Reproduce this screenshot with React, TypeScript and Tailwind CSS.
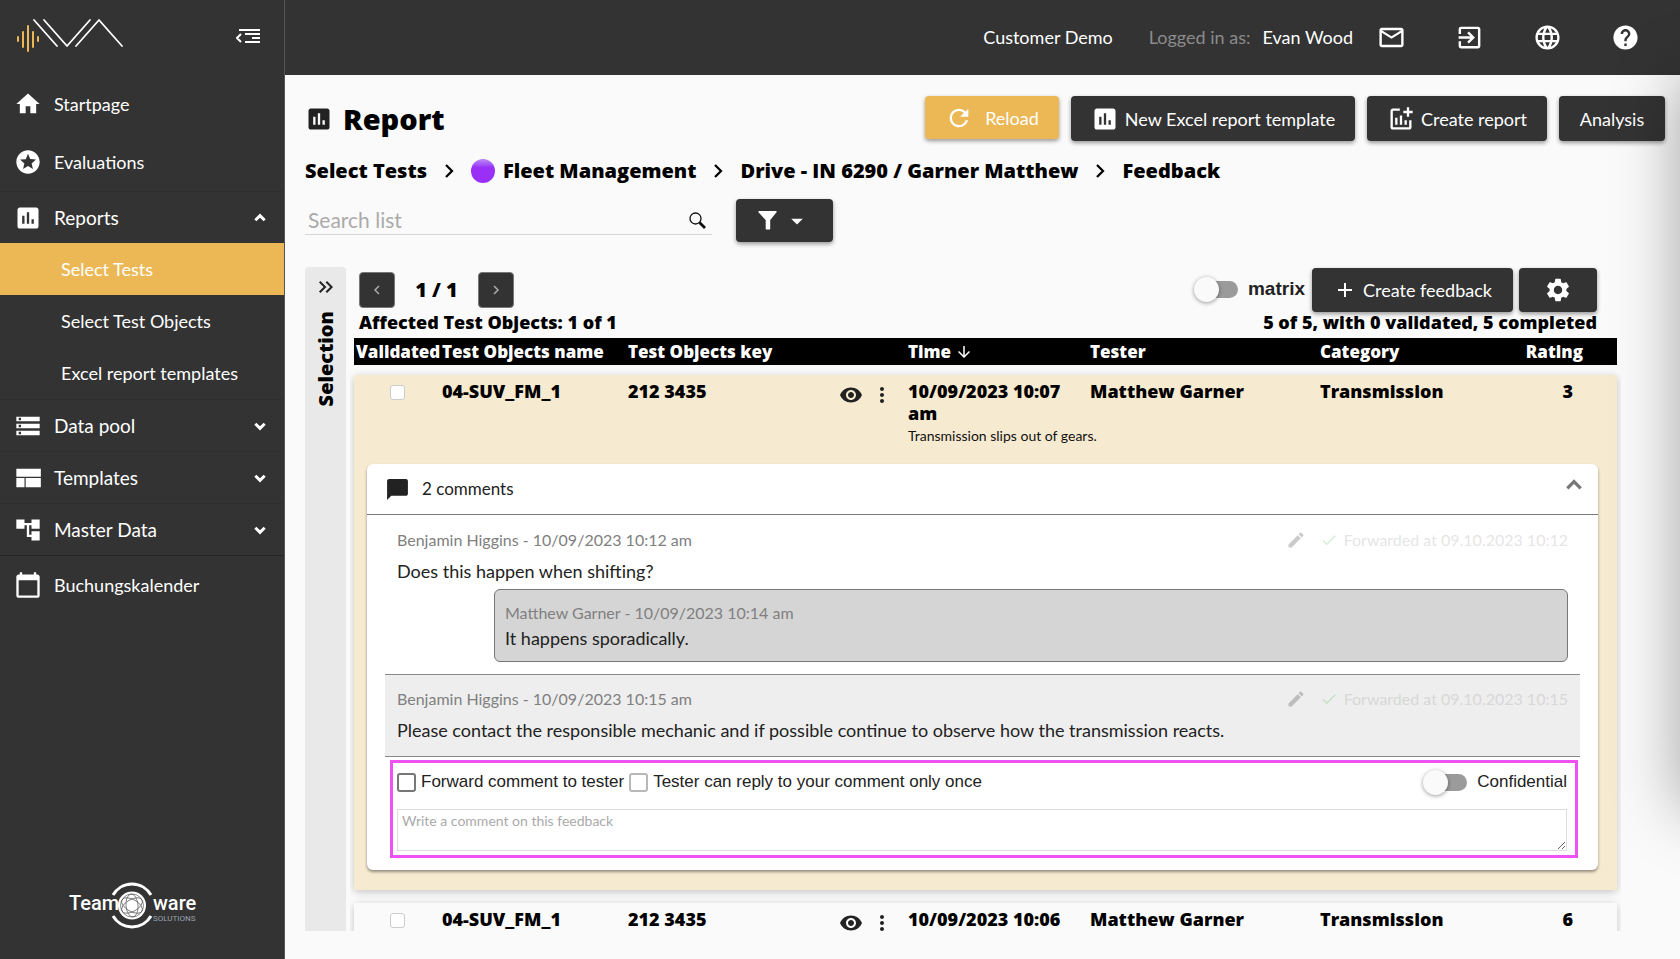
import { ReactNode } from 'react'
import {
  MdAccountTree,
  MdAdd,
  MdAddchart,
  MdArrowDownward,
  MdArrowDropDown,
  MdAssessment,
  MdCalendarToday,
  MdChatBubble,
  MdCheck,
  MdEdit,
  MdExitToApp,
  MdHelp,
  MdHome,
  MdKeyboardDoubleArrowRight,
  MdLanguage,
  MdMailOutline,
  MdMoreVert,
  MdRefresh,
  MdSettings,
  MdStars,
  MdStorage,
  MdVisibility,
} from 'react-icons/md'

function Chevron({ dir, className, stroke = 2 }: { dir: 'up' | 'down' | 'left' | 'right'; className?: string; stroke?: number }) {
  const points = {
    up: '2,8 6,4 10,8',
    down: '2,4 6,8 10,4',
    left: '8,2 4,6 8,10',
    right: '4,2 8,6 4,10',
  }
  return (
    <svg viewBox="0 0 12 12" className={className} fill="none" stroke="currentColor" strokeWidth={stroke} aria-hidden="true">
      <polyline points={points[dir]} />
    </svg>
  )
}

function Logo() {
  return (
    <svg width="108" height="36" viewBox="0 0 108 36" fill="none" strokeLinecap="round" aria-label="Logo">
      <g stroke="#ebb855" strokeWidth="2">
        <path d="M2 19v4M7 14v15M12 8v25M17 14v15M22 19v4" />
      </g>
      <g stroke="#fff" strokeWidth="1.8" strokeLinejoin="round">
        <path d="M18 2l23 26M28 2l23 26L74 2M60 28L83 2l23 26" />
      </g>
    </svg>
  )
}

function MenuFoldIcon() {
  return (
    <svg width="24" height="16" viewBox="0 0 24 16" fill="none" stroke="currentColor" strokeWidth="2" aria-hidden="true">
      <path d="M3 2h21M9 6h15M16 10h8M9 14h15M5 6L1 10l4 4" />
    </svg>
  )
}

function ViewCompactIcon({ className }: { className?: string }) {
  return (
    <svg viewBox="0 0 24 24" fill="currentColor" className={className} aria-hidden="true">
      <path d="M2 20h7v-8H2v8zm8 0h13v-8H10v8zM2 4v7h21V4H2z" />
    </svg>
  )
}

function TeamwareLogo() {
  return (
    <svg width="128" height="50" viewBox="0 0 128 50" fill="none" aria-label="Teamware Solutions">
      <g stroke="#fff" strokeWidth="3">
        <path d="M44 14a22 22 0 0 1 38 0M44 35a22 22 0 0 0 38 0" />
      </g>
      <circle cx="63" cy="24.500" r="14" fill="#fff" />
      <g stroke="#555" strokeWidth="0.7">
        <circle cx="63" cy="24.500" r="11.500" />
        <ellipse cx="63" cy="24.500" rx="11.500" ry="6" transform="rotate(30 63 24.500)" />
        <ellipse cx="63" cy="24.500" rx="11.500" ry="6" transform="rotate(-30 63 24.500)" />
        <ellipse cx="63" cy="24.500" rx="11.500" ry="6" transform="rotate(85 63 24.500)" />
      </g>
    </svg>
  )
}

interface NavItem {
  label: string
  icon: ReactNode
  open?: boolean
  children?: string[]
}

const topItems: NavItem[] = [
  { label: 'Startpage', icon: <MdHome className="size-7" /> },
  { label: 'Evaluations', icon: <MdStars className="size-7" /> },
]

const groups: NavItem[] = [
  {
    label: 'Reports',
    icon: <MdAssessment className="size-7" />,
    open: true,
    children: ['Select Tests', 'Select Test Objects', 'Excel report templates'],
  },
  { label: 'Data pool', icon: <MdStorage className="size-7" /> },
  { label: 'Templates', icon: <ViewCompactIcon className="size-7" /> },
  { label: 'Master Data', icon: <MdAccountTree className="size-7" /> },
]

function Sidebar() {
  return (
    <aside className="flex w-[285px] shrink-0 flex-col border-r border-[#555] bg-[#333] text-lg text-white">
      <div className="flex h-[75px] items-center justify-between pr-6 pb-1 pl-4">
        <Logo />
        <button aria-label="Collapse menu">
          <MenuFoldIcon />
        </button>
      </div>
      <nav>
        {topItems.map((item) => (
          <a key={item.label} href="#" className="flex h-[58px] items-center gap-3 pl-3.5">
            {item.icon}
            {item.label}
          </a>
        ))}
        {groups.map((group) => (
          <div key={group.label} className="border-t border-[#2f2f2f]">
            <button className="flex h-[51px] w-full items-center gap-3 pr-[17px] pl-3.5 text-[19px]">
              {group.icon}
              {group.label}
              <Chevron dir={group.open ? 'up' : 'down'} className="ml-auto size-3.5" stroke={2.5} />
            </button>
            {group.children?.map((child, i) => (
              <a
                key={child}
                href="#"
                className={`flex h-[52px] items-center pl-[61px] ${i === 0 ? 'bg-[#ebb855]' : ''}`}
              >
                {child}
              </a>
            ))}
          </div>
        ))}
        <a href="#" className="flex h-[58px] items-center gap-3 border-t border-[#262626] pl-3.5">
          <MdCalendarToday className="size-7" />
          Buchungskalender
        </a>
      </nav>
      <div className="relative mt-auto mb-7 ml-[69px] h-[50px] w-32 font-['Roboto',sans-serif]">
        <TeamwareLogo />
        <span className="absolute top-2 left-0 text-[20px] leading-7 font-medium">Team</span>
        <span className="absolute top-2 left-[84px] text-[20px] leading-7 font-medium">ware</span>
        <span className="absolute top-8 left-[84px] text-[8px] leading-3 text-gray-400">SOLUTIONS</span>
      </div>
    </aside>
  )
}

function TopBar() {
  return (
    <header className="flex h-[75px] shrink-0 items-center justify-end bg-[#333] pr-10 text-lg leading-6 text-white">
      <div className="flex pr-6 pb-0.5">
        <span className="mr-9">Customer Demo</span>
        <span className="mr-3 text-[#8b8b8b]">Logged in as:</span>
        <span>Evan Wood</span>
      </div>
      <div className="flex gap-[49px]">
        <button aria-label="Messages"><MdMailOutline className="size-[29px]" /></button>
        <button aria-label="Log out"><MdExitToApp className="size-[29px]" /></button>
        <button aria-label="Language"><MdLanguage className="size-[29px]" /></button>
        <button aria-label="Help"><MdHelp className="size-[29px]" /></button>
      </div>
    </header>
  )
}

function DarkButton({ children, className = '', label }: { children: ReactNode; className?: string; label?: string }) {
  return (
    <button
      aria-label={label}
      className={`flex shrink-0 items-center justify-center rounded bg-[#333] text-lg text-white shadow-[0_2px_4px_rgba(0,0,0,0.4)] ${className}`}
    >
      {children}
    </button>
  )
}

function Toggle({ label, className = '' }: { label: string; className?: string }) {
  return (
    <label className={`flex items-center gap-2.5 font-['Liberation_Sans',Arial,sans-serif] text-[#222] ${className}`}>
      <input
        type="checkbox"
        role="switch"
        className="relative h-[17px] w-[38px] appearance-none rounded-full bg-[#9b9b9b] before:absolute before:-top-1 before:-left-1.5 before:size-[25px] before:rounded-full before:bg-[#fafafa] before:shadow-[0_1px_4px_rgba(0,0,0,0.4)] before:content-['']"
      />
      {label}
    </label>
  )
}

function PageHeader() {
  return (
    <div className="pr-[15px] pl-5">
      <div className="flex items-center pt-[21px]">
        <MdAssessment className="size-7 text-[#222]" />
        <h1 className="ml-2.5 font-['Open_Sans',sans-serif] text-[29px] leading-[45px] font-extrabold text-black">Report</h1>
        <div className="ml-auto flex items-start gap-3">
          <button className="flex h-[43px] w-[134px] items-center justify-center gap-3 rounded bg-[#ebb855] text-lg text-white shadow-[0_2px_4px_rgba(0,0,0,0.4)]">
            <MdRefresh className="size-7" />
            Reload
          </button>
          <DarkButton className="h-[45px] w-[284px] gap-1.5">
            <MdAssessment className="size-7" />
            New Excel report template
          </DarkButton>
          <DarkButton className="h-[45px] w-[180px] gap-1.5">
            <MdAddchart className="size-7" />
            Create report
          </DarkButton>
          <DarkButton className="h-[45px] w-[106px]">Analysis</DarkButton>
        </div>
      </div>
      <nav className="mt-4 flex h-7 items-center font-['Open_Sans',sans-serif] text-xl font-extrabold text-black">
        <a href="#">Select Tests</a>
        <Chevron dir="right" className="mx-[13px] size-[18px]" stroke={1.5} />
        <span className="mr-2 size-6 rounded-full bg-linear-to-b from-[#b77cf5] from-5% to-[#9a2ff6] to-35%" />
        <a href="#">Fleet Management</a>
        <Chevron dir="right" className="mx-[13px] size-[18px]" stroke={1.5} />
        <a href="#">Drive - IN 6290 / Garner Matthew</a>
        <Chevron dir="right" className="mx-[13px] size-[18px]" stroke={1.5} />
        <span>Feedback</span>
      </nav>
      <div className="mt-3.5 flex h-[43px] items-center gap-6">
        <label className="flex h-7 w-[407px] items-center border-b border-[#d6d6d6] pr-1.5">
          <input
            type="text"
            aria-label="Search list"
            placeholder="Search list"
            className="min-w-0 flex-1 bg-transparent pl-[3px] text-[21px] leading-6 outline-none placeholder:text-[#aaa]"
          />
          <svg width="17" height="17" viewBox="0 0 17 17" fill="none" stroke="#111" aria-hidden="true">
            <circle cx="6.500" cy="6.500" r="5.500" strokeWidth="1.300" />
            <path d="M10.500 10.500l5.500 5.500" strokeWidth="2.800" />
          </svg>
        </label>
        <DarkButton className="h-[43px] w-[97px] gap-1.5" label="Filter">
          <svg width="19" height="21" viewBox="0 0 21 21" fill="currentColor" aria-hidden="true">
            <path d="M1 0h19q1 0 .5 1.500L13.500 10v9.500q0 1-1 1h-3q-1 0-1-1V10L.5 1.500Q0 0 1 0z" />
          </svg>
          <MdArrowDropDown className="size-7" />
        </DarkButton>
      </div>
    </div>
  )
}

function CommentHead({ author, time, forwarded }: { author: string; time: string; forwarded: string }) {
  return (
    <div className="flex h-6 items-center text-base text-[#808080]">
      <span>{author} - {time}</span>
      <span className="ml-auto flex items-center opacity-20">
        <button aria-label="Edit comment"><MdEdit className="size-5 text-black" /></button>
        <MdCheck className="mr-1.5 ml-3.5 size-[18px] text-[#2eb82e]" />
        Forwarded at {forwarded}
      </span>
    </div>
  )
}

function CommentForm() {
  return (
    <form className="mt-[3px] mr-0.5 ml-[5px] border-[3px] border-[#ee52f5] px-1 pt-1 pb-1 font-['Liberation_Sans',Arial,sans-serif] text-[17px] text-[#222]">
      <div className="flex h-[30px] items-center gap-[5px]">
        <label className="flex items-center gap-[5px]">
          <input type="checkbox" className="size-[19px] appearance-none rounded-[3px] border-2 border-[#777]" />
          Forward comment to tester
        </label>
        <label className="flex items-center gap-[5px]">
          <input type="checkbox" className="size-[19px] appearance-none rounded-[3px] border-2 border-[#b8b8b8]" />
          Tester can reply to your comment only once
        </label>
        <Toggle label="Confidential" className="mr-1 ml-auto" />
      </div>
      <div className="mt-3 mr-1">
        <textarea
          aria-label="Write a comment on this feedback"
          placeholder="Write a comment on this feedback"
          className="block h-[42px] w-full border border-[#ddd] px-1 py-px font-['Lato',sans-serif] text-sm placeholder:text-[#aaa]"
        />
      </div>
    </form>
  )
}

function Comments() {
  return (
    <section className="mr-[19px] mb-5 ml-[13px] rounded-md bg-white pb-3 text-[#222] shadow-[0_2px_3px_rgba(0,0,0,0.4)]">
      <div className="flex h-[51px] items-center border-b border-[#777] pr-3.5 pl-[18px]">
        <MdChatBubble className="mr-3 size-[25px]" />
        <span className="text-[17px]">2 comments</span>
        <button aria-label="Collapse comments" className="mb-2 ml-auto text-[#777]">
          <Chevron dir="up" className="size-5" />
        </button>
      </div>
      <div className="px-[18px]">
        <article className="px-3 pt-[13px] pb-3">
          <CommentHead author="Benjamin Higgins" time="10/09/2023 10:12 am" forwarded="09.10.2023 10:12" />
          <p className="mt-[7px] text-lg leading-6">Does this happen when shifting?</p>
          <div className="mt-1.5 ml-[97px] rounded-md border border-[#777] bg-[#d5d5d5] px-2.5 pt-[11px] pb-2.5">
            <p className="text-base leading-6 text-[#808080]">Matthew Garner - 10/09/2023 10:14 am</p>
            <p className="text-lg leading-[26px]">It happens sporadically.</p>
          </div>
        </article>
        <article className="h-[83px] border-y border-[#888] bg-[#eee] px-3 pt-3">
          <CommentHead author="Benjamin Higgins" time="10/09/2023 10:15 am" forwarded="09.10.2023 10:15" />
          <p className="mt-[7px] text-lg leading-6">
            Please contact the responsible mechanic and if possible continue to observe how the transmission reacts.
          </p>
        </article>
        <CommentForm />
      </div>
    </section>
  )
}

interface Feedback {
  name: string
  objectKey: string
  time: string
  tester: string
  category: string
  rating: number
  note?: string
}

const feedbacks: Feedback[] = [
  {
    name: '04-SUV_FM_1',
    objectKey: '212 3435',
    time: '10/09/2023 10:07 am',
    tester: 'Matthew Garner',
    category: 'Transmission',
    rating: 3,
    note: 'Transmission slips out of gears.',
  },
  {
    name: '04-SUV_FM_1',
    objectKey: '212 3435',
    time: '10/09/2023 10:06',
    tester: 'Matthew Garner',
    category: 'Transmission',
    rating: 6,
  },
]

function FeedbackRecord({ item }: { item: Feedback }) {
  return (
    <>
      <tbody aria-hidden="true"><tr><td className={item.note ? 'h-2.5' : 'h-[13px]'} /></tr></tbody>
      <tbody className={`rounded shadow-[0_2px_8px_rgba(0,0,0,0.22)] ${item.note ? 'bg-[#f6ead0]' : 'bg-[#fafafa]'}`}>
        <tr className="align-top font-['Open_Sans',sans-serif] text-lg leading-[22px] font-extrabold text-black">
          <td className="pt-[10px] pl-9">
            <input
              type="checkbox"
              aria-label={`Validate ${item.name}`}
              className="block size-[15px] appearance-none rounded-[3px] border border-[#ccc] bg-white"
            />
          </td>
          <td className="pt-[5px] pb-2">{item.name}</td>
          <td className="pt-[5px]">{item.objectKey}</td>
          <td className="pt-2">
            <div className="flex gap-[7px] pl-px text-[#222]">
              <button aria-label="Show feedback"><MdVisibility className="size-6" /></button>
              <button aria-label="More actions"><MdMoreVert className="size-6" /></button>
            </div>
          </td>
          <td className="pt-[5px] pr-2">{item.time}</td>
          <td className="pt-[5px]">{item.tester}</td>
          <td className="pt-[5px]">{item.category}</td>
          <td className="pt-[5px] pr-11 text-right">{item.rating}</td>
        </tr>
        {item.note && (
          <>
            <tr>
              <td colSpan={4} />
              <td colSpan={4} className="pt-[3px] pb-[19px] text-sm leading-[18px] text-[#111]">{item.note}</td>
            </tr>
            <tr>
              <td colSpan={8}><Comments /></td>
            </tr>
          </>
        )}
      </tbody>
    </>
  )
}

function FeedbackList() {
  return (
    <div className="flex min-w-0 flex-1 flex-col pl-1">
      <div className="flex h-[45px] items-center pr-6 pl-[5px]">
        <button aria-label="Previous page" disabled className="flex size-9 items-center justify-center rounded border border-[#777] bg-[#333] text-[#aaa]">
          <Chevron dir="left" className="size-3" stroke={1.5} />
        </button>
        <span className="w-[83px] text-center font-['Open_Sans',sans-serif] text-xl font-extrabold text-black">1 / 1</span>
        <button aria-label="Next page" disabled className="flex size-9 items-center justify-center rounded border border-[#777] bg-[#333] text-[#aaa]">
          <Chevron dir="right" className="size-3" stroke={1.5} />
        </button>
        <Toggle label="matrix" className="mr-[7px] ml-auto text-[19px] font-bold" />
        <DarkButton className="mr-1.5 h-11 w-[201px] gap-1.5">
          <MdAdd className="size-6" />
          Create feedback
        </DarkButton>
        <DarkButton className="h-11 w-[78px]" label="Settings">
          <MdSettings className="size-7" />
        </DarkButton>
      </div>
      <div className="flex h-[26px] items-start justify-between pr-6 pl-[5px] font-['Open_Sans',sans-serif] text-lg leading-5 font-extrabold text-black">
        <span>Affected Test Objects: 1 of 1</span>
        <span>5 of 5, with 0 validated, 5 completed</span>
      </div>
      <div className="-ml-1 min-h-0 flex-1 overflow-hidden pr-1 pl-1">
        <table className="w-full table-fixed border-separate border-spacing-0">
          <colgroup>
            <col className="w-[88px]" />
            <col className="w-[186px]" />
            <col className="w-[210px]" />
            <col className="w-[70px]" />
            <col className="w-[182px]" />
            <col className="w-[230px]" />
            <col className="w-[190px]" />
            <col />
          </colgroup>
          <thead className="bg-black text-left font-['Open_Sans',sans-serif] text-[17px] leading-[27px] whitespace-nowrap text-white">
            <tr className="*:font-extrabold">
              <th className="pl-0.5">Validated</th>
              <th>Test Objects name</th>
              <th>Test Objects key</th>
              <th aria-label="Actions" />
              <th>
                <span className="flex items-center gap-1">Time <MdArrowDownward className="size-[18px]" /></span>
              </th>
              <th>Tester</th>
              <th>Category</th>
              <th className="pr-[34px] text-right">Rating</th>
            </tr>
          </thead>
          {feedbacks.map((item) => (
            <FeedbackRecord key={item.time} item={item} />
          ))}
        </table>
      </div>
    </div>
  )
}

export default function App() {
  return (
    <div className="relative flex h-screen overflow-hidden bg-[#fafafa] font-['Lato',sans-serif]">
      <Sidebar />
      <div className="flex min-w-0 flex-1 flex-col">
        <TopBar />
        <main className="flex min-h-0 flex-1 flex-col pb-7">
          <PageHeader />
          <div className="mt-[25px] flex min-h-0 flex-1 gap-1 pr-[59px] pl-5">
            <button className="flex w-[41px] shrink-0 flex-col items-center gap-3 rounded-t bg-[#e9e9e9] pt-2 text-[#222]">
              <MdKeyboardDoubleArrowRight className="size-6" />
              <span className="rotate-180 font-['Open_Sans',sans-serif] text-xl font-extrabold text-black [writing-mode:vertical-rl]">Selection</span>
            </button>
            <FeedbackList />
          </div>
        </main>
      </div>
      {/* edge shadow of the closed drawer */}
      <div className="pointer-events-none absolute top-[75px] left-full h-[735px] w-40 shadow-[0_0_64px_rgba(0,0,0,0.35)]" />
    </div>
  )
}
